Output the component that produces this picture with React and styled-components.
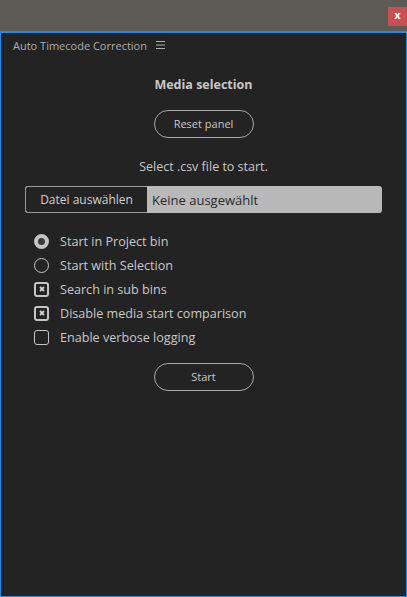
import React from 'react'
import styled, { createGlobalStyle } from 'styled-components'

const GlobalStyle = createGlobalStyle`
  html, body {
    margin: 0;
    padding: 0;
    background: #232323;
    font-family: 'Open Sans', 'Noto Sans', sans-serif;
  }
  #root {
    height: 597px;
  }
`

const options = [
  { label: 'Start in Project bin', kind: 'radio', checked: true },
  { label: 'Start with Selection', kind: 'radio', checked: false },
  { label: 'Search in sub bins', kind: 'check', checked: true },
  { label: 'Disable media start comparison', kind: 'check', checked: true },
  { label: 'Enable verbose logging', kind: 'check', checked: false },
]

const App = () => {
  return (
    <Window>
      <GlobalStyle />
      <TitleBar>
        <CloseButton>x</CloseButton>
      </TitleBar>
      <Panel>
        <PanelHeader>
          <span>Auto Timecode Correction</span>
          <MenuIcon width='9' height='8' viewBox='0 0 9 8'>
            <rect x='0' y='0' width='9' height='1' />
            <rect x='0' y='3.5' width='9' height='1' />
            <rect x='0' y='7' width='9' height='1' />
          </MenuIcon>
        </PanelHeader>
        <Content>
          <Heading>Media selection</Heading>
          <PillButton>Reset panel</PillButton>
          <Hint>Select .csv file to start.</Hint>
          <FileInput>
            <FileButton>Datei auswählen</FileButton>
            <FileName>Keine ausgewählt</FileName>
          </FileInput>
          <OptionList>
            {options.map((opt) => (
              <Option key={opt.label}>
                {opt.kind === 'radio' ? (
                  <Radio $checked={opt.checked} />
                ) : (
                  <Check $checked={opt.checked}>
                    {opt.checked && (
                      <svg width='6' height='6' viewBox='0 0 6 6'>
                        <path d='M1 1L5 5M5 1L1 5' stroke='#d0d0d0' strokeWidth='1.8' />
                      </svg>
                    )}
                  </Check>
                )}
                <span>{opt.label}</span>
              </Option>
            ))}
          </OptionList>
          <PillButton $top={14}>Start</PillButton>
        </Content>
      </Panel>
    </Window>
  )
}

const Window = styled.div`
  width: 407px;
  height: 597px;
  display: flex;
  flex-direction: column;
`

const TitleBar = styled.div`
  height: 31px;
  flex: none;
  background: #5e5a56;
  display: flex;
  justify-content: flex-end;
  align-items: flex-start;
  padding-top: 7px;
  box-sizing: border-box;
`

const CloseButton = styled.div`
  width: 19px;
  height: 19px;
  background: #c65150;
  color: #fff;
  font-family: 'DejaVu Sans', sans-serif;
  font-weight: bold;
  font-size: 10px;
  display: flex;
  align-items: center;
  justify-content: center;
  line-height: 1;
  padding-bottom: 2px;
  box-sizing: border-box;
`

const Panel = styled.div`
  flex: 1;
  border: 1px solid #2488ee;
  border-top-width: 2px;
  background: #232323;
  display: flex;
  flex-direction: column;
`

const PanelHeader = styled.div`
  height: 24px;
  display: flex;
  align-items: center;
  gap: 9px;
  padding-left: 12px;
  font-size: 11px;
  color: #aeaeae;
`

const MenuIcon = styled.svg`
  fill: #b0b0b0;
`

const Content = styled.div`
  display: flex;
  flex-direction: column;
  align-items: center;
  padding: 0 24px;
`

const Heading = styled.div`
  margin-top: 19px;
  font-size: 12.5px;
  font-weight: bold;
  color: #c8c8c8;
`

const PillButton = styled.button`
  margin-top: ${({ $top }) => ($top ?? 17)}px;
  width: 100px;
  height: 28px;
  border: 1px solid #a8a8a8;
  border-radius: 14px;
  background: transparent;
  color: #c8c8c8;
  font-family: inherit;
  font-size: 11px;
  padding: 0;
  padding-bottom: 1px;
`

const Hint = styled.div`
  margin-top: 20px;
  font-size: 12.5px;
  color: #c8c8c8;
`

const FileInput = styled.div`
  margin-top: 11px;
  align-self: stretch;
  height: 27px;
  display: flex;
  border-radius: 3px;
  overflow: hidden;
  background: #b9b9b9;
`

const FileButton = styled.div`
  width: 122px;
  box-sizing: border-box;
  border: 1px solid #9a9a9a;
  border-right: none;
  border-radius: 3px 0 0 3px;
  background: #232323;
  color: #d0d0d0;
  font-size: 12px;
  display: flex;
  align-items: center;
  justify-content: center;
`

const FileName = styled.div`
  flex: 1;
  display: flex;
  align-items: center;
  padding-left: 5px;
  font-size: 13px;
  color: #2a2a2a;
`

const OptionList = styled.div`
  align-self: stretch;
  margin-top: 16px;
  padding-left: 9px;
  display: flex;
  flex-direction: column;
`

const Option = styled.div`
  height: 24px;
  display: flex;
  align-items: center;
  gap: 11px;
  font-size: 12.6px;
  color: #c8c8c8;
`

const Radio = styled.span`
  width: 15px;
  height: 15px;
  box-sizing: border-box;
  border-radius: 50%;
  border: ${({ $checked }) => ($checked ? '4px solid #c4c4c4' : '1.5px solid #c4c4c4')};
  background: ${({ $checked }) => ($checked ? '#3a3a3a' : 'transparent')};
`

const Check = styled.span`
  width: 15px;
  height: 15px;
  box-sizing: border-box;
  border-radius: 3px;
  border: ${({ $checked }) => ($checked ? '2px' : '1.5px')} solid #c4c4c4;
  display: flex;
  align-items: center;
  justify-content: center;
`

export default App
